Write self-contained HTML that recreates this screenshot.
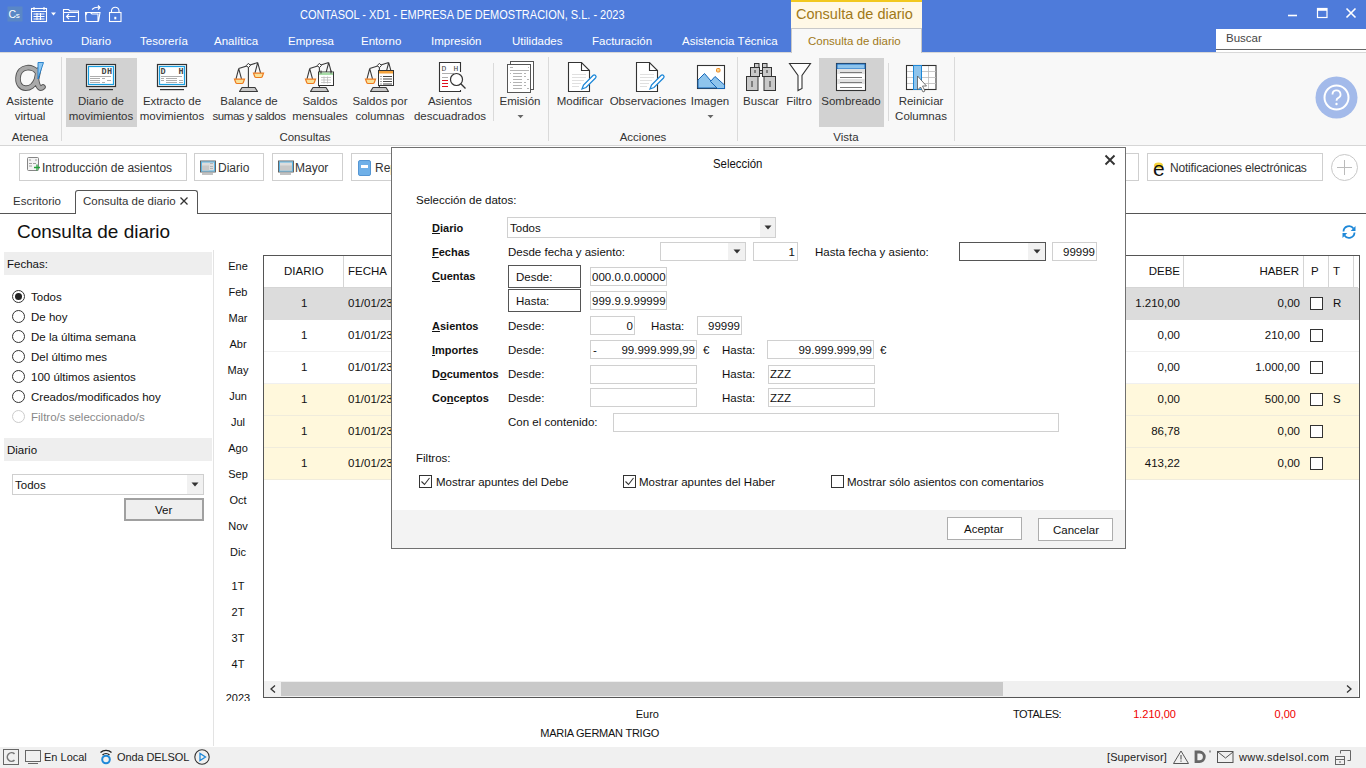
<!DOCTYPE html>
<html><head><meta charset="utf-8">
<style>
*{box-sizing:border-box;margin:0;padding:0}
html,body{width:1366px;height:768px;overflow:hidden;background:#fff;font-family:"Liberation Sans",sans-serif;font-size:11.5px;color:#222}
.a{position:absolute}
.t{position:absolute;white-space:nowrap;line-height:1}
#titlebar{left:0;top:0;width:1366px;height:52px;background:#4E7BDA;border-bottom:1px solid #D8D8D8;box-sizing:content-box}
.menu{color:#fff;font-size:11.5px;top:36px}
#ribbon{left:0;top:53px;width:1366px;height:93px;background:#F8F8F8;border-bottom:1px solid #D6D6D6}
.rb{position:absolute;text-align:center;color:#333;font-size:11.5px;line-height:15px;white-space:nowrap}
.sel{background:#D2D2D2}
.grp{position:absolute;top:84px;color:#333;font-size:11.5px;text-align:center}
.sep{position:absolute;width:1px;background:#DADADA}
.btn{position:absolute;border:1px solid #CFCFCF;background:#fff;height:28px}
.btn span{position:absolute;top:7px;font-size:12px;color:#333;white-space:nowrap}
.radio{position:absolute;width:13px;height:13px;border:1px solid #333;border-radius:50%;background:#fff}
.lbl{position:absolute;font-size:11.5px;color:#111;white-space:nowrap;line-height:1}
.month{position:absolute;left:213px;width:50px;text-align:center;font-size:11px;color:#111;line-height:1}
.cell{position:absolute;font-size:11.5px;color:#111;white-space:nowrap;line-height:1}
.cb{position:absolute;width:13px;height:13px;border:1px solid #333;background:#fff}
.inp{position:absolute;border:1px solid #D0D0D0;background:#fff;height:20px}
.dlbl{position:absolute;font-size:11.5px;color:#111;white-space:nowrap;line-height:1}
.bold{font-weight:bold;font-size:11px}
</style></head><body>

<!-- Title bar + menu -->
<div id="titlebar" class="a"></div>
<svg class="a" style="left:0;top:0" width="130" height="30" viewBox="0 0 130 30">
 <rect x="7.5" y="6.5" width="15" height="15" fill="#5A87C6"/>
 <text x="8.5" y="18.2" font-family="Liberation Sans" font-size="10.5" fill="#fff">C</text><text x="15.8" y="18.2" font-family="Liberation Sans" font-size="8" fill="#fff">s</text>
 <g fill="none" stroke="#fff" stroke-width="1.1">
 <rect x="31.5" y="8.5" width="15" height="13"/>
 <path d="M31.5 11.5h15M34 7v3M44 7v3M33.5 14h11M33.5 16.5h11M33.5 19h11M37 13v7M40.5 13v7"/>
 <path d="M63.5 9.5h5l1.5 1.5h8.5v10.5h-15z M63.5 12.5h15"/>
 <path d="M75.5 16.5h-9M69 14l-2.5 2.5 2.5 2.5"/>
 <path d="M85.5 12.5h5l1.5 1.5h6v7.5h-12z M86 15l1-2.5h13l-1.5 9"/>
 <path d="M92 9.5q3-3 8-2M98 5.5l2 2-2 2"/>
 <rect x="109.5" y="12.5" width="11.5" height="9"/>
 <path d="M111.5 12.5v-2a3.8 3.8 0 0 1 7.5 0v2"/>
 </g>
 <path d="M51 12.5h5l-2.5 3z" fill="#fff"/>
 <rect x="114.3" y="16.8" width="2" height="2.5" fill="#fff"/>
</svg>
<svg class="a" style="left:1280px;top:0" width="86" height="30" viewBox="1280 0 86 30">
 <path d="M1288 15.5h9" stroke="#fff" stroke-width="1.6"/>
 <rect x="1317.5" y="8.5" width="9.5" height="9" fill="none" stroke="#fff" stroke-width="1.2"/>
 <path d="M1317.5 9.8h9.5" stroke="#fff" stroke-width="2"/>
 <path d="M1346.5 8.5l9 9M1355.5 8.5l-9 9" stroke="#fff" stroke-width="1.6"/>
</svg>

<div class="t" style="left:300px;top:9px;color:#fff;font-size:12.5px;transform:scaleX(0.88);transform-origin:0 0">CONTASOL - XD1 - EMPRESA DE DEMOSTRACION, S.L. - 2023</div>
<div class="a" style="left:791px;top:0;width:131px;height:29px;background:#FFF8E6;border-top:2px solid #F2C81E;border-bottom:1px solid #C8C8C8"></div>
<div class="t" style="left:796px;top:7px;color:#A07818;font-size:14.5px">Consulta de diario</div>
<div class="a" style="left:791px;top:29px;width:131px;height:25px;background:#F8F8F8;border-left:1px solid #C8C8C8;border-right:1px solid #C8C8C8"></div>
<div class="t" style="left:808px;top:36px;color:#A07818;font-size:11.5px">Consulta de diario</div>

<div class="t menu" style="left:14px">Archivo</div>
<div class="t menu" style="left:81px">Diario</div>
<div class="t menu" style="left:140px">Tesorería</div>
<div class="t menu" style="left:214px">Analítica</div>
<div class="t menu" style="left:288px">Empresa</div>
<div class="t menu" style="left:361px">Entorno</div>
<div class="t menu" style="left:431px">Impresión</div>
<div class="t menu" style="left:512px">Utilidades</div>
<div class="t menu" style="left:592px">Facturación</div>
<div class="t menu" style="left:682px">Asistencia Técnica</div>

<div class="a" style="left:1216px;top:29px;width:150px;height:23px;background:#fff"></div><div class="a" style="left:1216px;top:49px;width:150px;height:1px;background:#666"></div>
<div class="t" style="left:1226px;top:33px;color:#444;font-size:11.5px">Buscar</div>

<!-- Ribbon -->
<div id="ribbon" class="a"></div>
<div class="a sel" style="left:66px;top:58px;width:71px;height:69px"></div>
<div class="a sel" style="left:819px;top:58px;width:65px;height:69px"></div>
<div class="sep" style="left:61px;top:57px;height:84px"></div>
<div class="sep" style="left:493px;top:63px;height:58px"></div>
<div class="sep" style="left:548px;top:57px;height:84px"></div>
<div class="sep" style="left:737px;top:57px;height:84px"></div>
<div class="sep" style="left:888px;top:63px;height:58px"></div>
<div class="sep" style="left:954px;top:57px;height:84px"></div>
<div class="rb" style="left:0;width:60px;top:94px">Asistente<br>virtual</div>
<div class="rb" style="left:61px;width:80px;top:94px">Diario de<br>movimientos</div>
<div class="rb" style="left:132px;width:80px;top:94px">Extracto de<br>movimientos</div>
<div class="rb" style="left:204px;width:90px;top:94px">Balance de<br><span style="letter-spacing:-0.45px">sumas y saldos</span></div>
<div class="rb" style="left:285px;width:70px;top:94px">Saldos<br>mensuales</div>
<div class="rb" style="left:345px;width:70px;top:94px">Saldos por<br>columnas</div>
<div class="rb" style="left:405px;width:90px;top:94px">Asientos<br>descuadrados</div>
<div class="rb" style="left:490px;width:60px;top:94px">Emisión</div>
<div class="rb" style="left:550px;width:60px;top:94px">Modificar</div>
<div class="rb" style="left:608px;width:80px;top:94px">Observaciones</div>
<div class="rb" style="left:680px;width:60px;top:94px">Imagen</div>
<div class="rb" style="left:741px;width:40px;top:94px">Buscar</div>
<div class="rb" style="left:779px;width:40px;top:94px">Filtro</div>
<div class="rb" style="left:816px;width:70px;top:94px">Sombreado</div>
<div class="rb" style="left:886px;width:70px;top:94px">Reiniciar<br>Columnas</div>
<div class="rb" style="left:0;width:60px;top:130px">Atenea</div>
<div class="rb" style="left:265px;width:80px;top:130px">Consultas</div>
<div class="rb" style="left:603px;width:80px;top:130px">Acciones</div>
<div class="rb" style="left:816px;width:60px;top:130px">Vista</div>
<svg class="a" style="left:0;top:0" width="1366" height="150" viewBox="0 0 1366 150">

 <!-- alpha -->
 <g fill="none" stroke-linecap="round">
 <path d="M37.5 72.5C34 66 19 64.5 18 78C17.5 91 32 91.5 36.5 79.5L38.5 70M36.5 80C38 88 40.5 89.5 43 87" stroke="#555" stroke-width="5.6"/>
 <path d="M37.5 72.5C34 66 19 64.5 18 78C17.5 91 32 91.5 36.5 79.5L38.5 70M36.5 80C38 88 40.5 89.5 43 87" stroke="#A9A9A9" stroke-width="3.8"/>
 </g>
 <path d="M38 62.5h5.5l-5.5 16.5z" fill="#8EC8F2" stroke="#1E7BC8" stroke-width="0.9"/>
 <!-- Diario de movimientos -->
 <g stroke-linecap="butt">
 <rect x="86.5" y="64.5" width="29" height="22" fill="#fff" stroke="#333" stroke-width="1.2"/>
 <rect x="88.5" y="66.5" width="25" height="18" fill="none" stroke="#1BA1E2" stroke-width="1.2"/>
 <rect x="89" y="89" width="24" height="1.2" fill="#333"/>
 <text x="101.5" y="74" font-family="Liberation Mono" font-size="8.5" font-weight="bold" fill="#444" letter-spacing="0.5">DH</text>
 <path d="M90 76.5h21M90 78.5h10M90 80.5h10M90 82.5h10M102 78.5h3M107 80.5h4M102 82.5h3" stroke="#999" stroke-width="0.8"/>
 <!-- Extracto -->
 <rect x="157.5" y="64.5" width="29" height="22" fill="#fff" stroke="#333" stroke-width="1.2"/>
 <rect x="159.5" y="66.5" width="25" height="18" fill="none" stroke="#1BA1E2" stroke-width="1.2"/>
 <rect x="160" y="89" width="24" height="1.2" fill="#333"/>
 <text x="160.5" y="74" font-family="Liberation Mono" font-size="8.5" font-weight="bold" fill="#444">D</text>
 <text x="178.5" y="74" font-family="Liberation Mono" font-size="8.5" font-weight="bold" fill="#444">H</text>
 <path d="M161 76.5h21M161 78.5h3M161 80.5h3M166 78.5h11M166 80.5h11M166 82.5h11M179 80.5h4M179 82.5h4" stroke="#999" stroke-width="0.8"/>
 </g>
 <!-- Balance -->
 <g transform="translate(0,0)"><path d="M238.7 68.6L257.7 62.6M248.4 66V87.5M238.7 68.6l-2.7 10.2M238.7 68.6l2.8 10.2M257.7 62.6l-2.7 10.2M257.7 62.6l2.8 10.2" stroke="#3A3A3A" stroke-width="1.1" fill="none"/><path d="M248.4 63.3l2 2.2-2 2.2-2-2.2z" fill="#fff" stroke="#3A3A3A" stroke-width="1"/><path d="M234.5 79.2h10l-1.2 3.3q-.4 1-1.4 1h-4.8q-1 0-1.4-1z" fill="#F8E19A" stroke="#EE7A1E" stroke-width="1.2"/><path d="M253.5 73.2h10l-1.2 3.3q-.4 1-1.4 1h-4.8q-1 0-1.4-1z" fill="#F8E19A" stroke="#EE7A1E" stroke-width="1.2"/><path d="M239.5 91.5l2.5-4h13l2.5 4z" fill="#C8C8C8" stroke="#3A3A3A" stroke-width="1.1" stroke-linejoin="round"/></g>
 <!-- Saldos mensuales -->
 <g transform="translate(71,0)"><path d="M238.7 68.6L257.7 62.6M248.4 66V87.5M238.7 68.6l-2.7 10.2M238.7 68.6l2.8 10.2M257.7 62.6l-2.7 10.2M257.7 62.6l2.8 10.2" stroke="#3A3A3A" stroke-width="1.1" fill="none"/><path d="M248.4 63.3l2 2.2-2 2.2-2-2.2z" fill="#fff" stroke="#3A3A3A" stroke-width="1"/><path d="M234.5 79.2h10l-1.2 3.3q-.4 1-1.4 1h-4.8q-1 0-1.4-1z" fill="#F8E19A" stroke="#EE7A1E" stroke-width="1.2"/><path d="M239.5 91.5l2.5-4h13l2.5 4z" fill="#C8C8C8" stroke="#3A3A3A" stroke-width="1.1" stroke-linejoin="round"/></g>
 <rect x="318.5" y="72" width="15" height="13.5" fill="#fff" stroke="#333" stroke-width="1"/>
 <rect x="319" y="72.5" width="14" height="2.5" fill="#A8DDA8"/>
 <path d="M321 70.5v3M331 70.5v3" stroke="#333" stroke-width="1"/>
 <path d="M321 77.5h10M321 80h10M321 82.5h10M324 76.5v7M327.5 76.5v7" stroke="#BBB" stroke-width="0.8"/>
 <!-- Saldos por columnas -->
 <g transform="translate(131,0)"><path d="M238.7 68.6L257.7 62.6M248.4 66V87.5M238.7 68.6l-2.7 10.2M238.7 68.6l2.8 10.2M257.7 62.6l-2.7 10.2M257.7 62.6l2.8 10.2" stroke="#3A3A3A" stroke-width="1.1" fill="none"/><path d="M248.4 63.3l2 2.2-2 2.2-2-2.2z" fill="#fff" stroke="#3A3A3A" stroke-width="1"/><path d="M234.5 79.2h10l-1.2 3.3q-.4 1-1.4 1h-4.8q-1 0-1.4-1z" fill="#F8E19A" stroke="#EE7A1E" stroke-width="1.2"/><path d="M239.5 91.5l2.5-4h13l2.5 4z" fill="#C8C8C8" stroke="#3A3A3A" stroke-width="1.1" stroke-linejoin="round"/></g>
 <rect x="378.5" y="70.5" width="15" height="15" fill="#fff" stroke="#333" stroke-width="1"/>
 <rect x="379" y="71" width="14" height="2.5" fill="#F4A23C"/>
 <path d="M380.5 76.5h1M380.5 79h1M380.5 81.5h1M380.5 84h1M383 76.5h9M383 79h9M383 81.5h9M383 84h9" stroke="#333" stroke-width="0.9"/>
 <!-- Asientos descuadrados -->
 <path d="M460.5 72V62.5h-21v29h21v-1.5" fill="#fff" stroke="#333" stroke-width="1.1"/>
 <text x="441.5" y="71" font-family="Liberation Mono" font-size="8" fill="#444">D</text>
 <text x="453.5" y="71" font-family="Liberation Mono" font-size="8" fill="#444">H</text>
 <path d="M442 73.5h12M442 77.5h6" stroke="#999" stroke-width="0.8"/>
 <path d="M442 80.5h6M442 83.5h6M442 86.5h6" stroke="#E0101E" stroke-width="1"/>
 <circle cx="456.5" cy="79.5" r="6" fill="#fff" stroke="#333" stroke-width="1.2"/>
 <path d="M460.8 83.8l4.7 4.7" stroke="#333" stroke-width="1.3"/>
 <!-- Emision -->
 <rect x="510.5" y="61.5" width="23" height="28" fill="#fff" stroke="#555" stroke-width="1"/>
 <rect x="507.5" y="64.5" width="23" height="28" fill="#fff" stroke="#555" stroke-width="1"/>
 <path d="M510 67.5h3M528 67.5h1M510 70.5h19M510 73.5h1M513 73.5h9M524 73.5h2M513 76.5h9M524 76.5h2M513 79.5h9M527 79.5h2M510 82.5h1M513 82.5h9M524 82.5h2M513 85.5h9M524 85.5h2M513 88.5h9M527 88.5h2" stroke="#AAA" stroke-width="0.9"/>
 <!-- Modificar -->
 <path d="M568.5 62.5h13l8 8v21h-21z" fill="#fff" stroke="#333" stroke-width="1.1"/>
 <path d="M581.5 62.5v8h8" fill="none" stroke="#333" stroke-width="1.1"/>
 <path d="M572 74.5h14M572 77.5h14M572 80.5h12M572 83.5h9M572 86.5h7" stroke="#DDD" stroke-width="0.9"/>
 <path d="M582 89l1.5-4 9.5-9.5a1.7 1.7 0 0 1 2.5 2.5l-9.5 9.5z" fill="#fff" stroke="#1E88D8" stroke-width="1.3"/>
 <!-- Observaciones -->
 <path d="M636.5 62.5h13l8 8v21h-21z" fill="#fff" stroke="#333" stroke-width="1.1"/>
 <path d="M649.5 62.5v8h8" fill="none" stroke="#333" stroke-width="1.1"/>
 <path d="M640 74.5h14M640 77.5h14M640 80.5h12M640 83.5h9M640 86.5h7" stroke="#DDD" stroke-width="0.9"/>
 <path d="M650 89l1.5-4 9.5-9.5a1.7 1.7 0 0 1 2.5 2.5l-9.5 9.5z" fill="#fff" stroke="#1E88D8" stroke-width="1.3"/>
 <!-- Imagen -->
 <rect x="697.5" y="65.5" width="27" height="23" fill="#fff" stroke="#333" stroke-width="1.1"/>
 <path d="M698 80l6.5-6.5 12.5 14.5h-19z" fill="#8EC4EC" stroke="#1566B8" stroke-width="1"/>
 <path d="M710.5 81.5l4.5-5 9.5 8.5v3.5h-7z" fill="#8EC4EC" stroke="#1566B8" stroke-width="1"/>
 <rect x="716.5" y="68.5" width="3.5" height="3.5" rx="1" fill="#F9D68C" stroke="#F08A24" stroke-width="1"/>
 <!-- Buscar -->
 <g fill="#C9C9C9" stroke="#333" stroke-width="1">
 <rect x="754.5" y="63.5" width="4.5" height="4"/><rect x="762.5" y="63.5" width="4.5" height="4"/>
 <rect x="750.5" y="67.5" width="9" height="9"/><rect x="762.5" y="67.5" width="9" height="9"/>
 <rect x="746.5" y="76.5" width="11.5" height="14"/><rect x="764" y="76.5" width="11.5" height="14"/>
 <rect x="759.5" y="70.5" width="3" height="3"/>
 </g>
 <path d="M755 70v3M767 70v3M752 81v6M770 81v6" stroke="#333" stroke-width="1"/>
 <!-- Filtro -->
 <path d="M789.5 63.5h21l-8.5 12v13l-4 2v-15z" fill="#fff" stroke="#333" stroke-width="1.1"/>
 <!-- Sombreado -->
 <rect x="836.5" y="63.5" width="29" height="27" fill="#fff" stroke="#333" stroke-width="1.1"/>
 <rect x="837" y="64" width="28" height="5" fill="#8EC4EC" stroke="#1568C0" stroke-width="1"/>
 <rect x="837" y="69" width="28" height="5" fill="#E2E2E2"/>
 <rect x="837" y="79" width="28" height="5" fill="#E2E2E2"/>
 <path d="M840 72.5h22M840 77.5h22M840 82.5h22M840 87.5h22" stroke="#7A7A7A" stroke-width="1"/>
 <!-- Reiniciar columnas -->
 <rect x="906.5" y="65.5" width="29.5" height="24" fill="#fff" stroke="#333" stroke-width="1.1"/>
 <path d="M907 71.5h29M907 77.5h29M907 83.5h29M928.5 66v23" stroke="#BBB" stroke-width="0.8"/>
 <rect x="913.5" y="65.5" width="8" height="24" fill="#8EC4EC" stroke="#1E88D8" stroke-width="1"/>
 <path d="M917.5 76v14l3-3 2.5 5 2-1-2.5-5h4z" fill="#fff" stroke="#555" stroke-width="0.8"/>
 <!-- dropdown arrows -->
 <path d="M517.5 115h6l-3 3.2z" fill="#666"/>
 <path d="M707.5 115h6l-3 3.2z" fill="#666"/>
 <!-- help -->
 <circle cx="1336.5" cy="97.5" r="21" fill="#A3BAEA"/>
 <circle cx="1336.5" cy="97.5" r="12" fill="none" stroke="#fff" stroke-width="2"/>
 <path d="M1332.5 94.5a4 4 0 1 1 5.5 3.6c-1.2.6-1.5 1.2-1.5 2.6" fill="none" stroke="#fff" stroke-width="1.8"/>
 <circle cx="1336.5" cy="104" r="1.2" fill="#fff"/>
</svg>

<!-- Toolbar buttons -->
<div class="btn" style="left:19px;top:153px;width:168px"><span style="left:22px">Introducción de asientos</span></div>
<div class="btn" style="left:194px;top:153px;width:70px"><span style="left:23px">Diario</span></div>
<div class="btn" style="left:272px;top:153px;width:71px"><span style="left:22px">Mayor</span></div>
<div class="btn" style="left:351px;top:153px;width:60px"><span style="left:23px">Rep</span></div>
<div class="btn" style="left:1060px;top:153px;width:79px"></div>
<div class="btn" style="left:1147px;top:153px;width:176px"><span style="left:22px;letter-spacing:-0.2px">Notificaciones electrónicas</span></div>
<svg class="a" style="left:0;top:145px" width="1366" height="110" viewBox="0 145 1366 110">
 <!-- intro icon -->
 <rect x="27.5" y="157.5" width="11" height="13" rx="1" fill="#F4F4F4" stroke="#777" stroke-width="0.9"/>
 <path d="M29 160h2M35 160h2M29 163.5h3M29 166h3M33 163.5h3" stroke="#888" stroke-width="0.8"/>
 <path d="M34 167.5h6M37 164.5v6" stroke="#22A03A" stroke-width="1.3"/>
 <!-- diario icon -->
 <g transform="translate(0,2.5)">
 <rect x="200.5" y="158.5" width="15" height="11" fill="#DDD" stroke="#555" stroke-width="0.9"/>
 <rect x="201.5" y="159.5" width="13" height="9" fill="none" stroke="#4FB3E8" stroke-width="0.9"/>
 <rect x="202" y="163" width="7" height="5" fill="#C8C8C8"/>
 <path d="M210 161h3M210 164h3M210 166h3" stroke="#AAA" stroke-width="0.8"/>
 <path d="M202 171.5h11" stroke="#666" stroke-width="0.8"/>
 <!-- mayor icon -->
 <rect x="278.5" y="158.5" width="15" height="11" fill="#DDD" stroke="#555" stroke-width="0.9"/>
 <rect x="279.5" y="159.5" width="13" height="9" fill="none" stroke="#4FB3E8" stroke-width="0.9"/>
 <rect x="280" y="163" width="12" height="5" fill="#C8C8C8"/>
 <path d="M280 171.5h11" stroke="#666" stroke-width="0.8"/>
 </g>
 <!-- rep icon -->
 <rect x="358.5" y="160.5" width="12" height="15" rx="1.5" fill="#6FB0E8" stroke="#4A8FD0" stroke-width="0.9"/>
 <rect x="361" y="165" width="7" height="3" fill="#fff"/>
 <!-- notif e -->
 <ellipse cx="1158.5" cy="165.5" rx="4.5" ry="3" fill="#F5D33A"/>
 <text x="1153" y="175.5" font-family="Liberation Sans" font-size="21" fill="#111">e</text>
 <!-- plus -->
 <circle cx="1344.5" cy="167.5" r="13" fill="#fff" stroke="#C8C8C8" stroke-width="1"/>
 <path d="M1337 167.5h15M1344.5 160v15" stroke="#BBB" stroke-width="1"/>
 <!-- tab x -->
 <path d="M180.5 197.5l7 7M187.5 197.5l-7 7" stroke="#333" stroke-width="1.3"/>
 <!-- refresh -->
 <path d="M1343.5 231.5a5.5 5.5 0 0 1 10-3" fill="none" stroke="#1E88D8" stroke-width="1.8"/>
 <path d="M1355.5 226v5h-4.8z" fill="#1E88D8"/>
 <path d="M1354.5 232.5a5.5 5.5 0 0 1-10 3" fill="none" stroke="#1E88D8" stroke-width="1.8"/>
 <path d="M1342.5 238v-5h4.8z" fill="#1E88D8"/>
</svg>

<!-- Tabs -->
<div class="a" style="left:0;top:213px;width:1366px;height:1px;background:#555"></div>
<div class="t" style="left:13px;top:196px;font-size:11.5px;color:#333">Escritorio</div>
<div class="a" style="left:75px;top:190px;width:123px;height:24px;background:#fff;border:1px solid #555;border-bottom:none;border-radius:3px 3px 0 0"></div>
<div class="t" style="left:83px;top:196px;font-size:11.5px;color:#333">Consulta de diario</div>
<svg class="a" style="left:0;top:190px" width="200" height="22" viewBox="0 190 200 22"><path d="M180.5 197.5l7 7M187.5 197.5l-7 7" stroke="#333" stroke-width="1.3"/></svg>

<div class="t" style="left:17px;top:222px;font-size:19px;color:#111">Consulta de diario</div>

<!-- Left panel -->
<div class="a" style="left:4px;top:252px;width:208px;height:23px;background:#EEEEEE"></div>
<div class="lbl" style="left:7px;top:259px">Fechas:</div>
<div class="a" style="left:213px;top:250px;width:1px;height:496px;background:#E3E3E3"></div>
<div class="radio" style="left:12px;top:290px"></div><div class="a" style="left:15px;top:293px;width:7px;height:7px;border-radius:50%;background:#222"></div>
<div class="lbl" style="left:31px;top:292px">Todos</div>
<div class="radio" style="left:12px;top:310px"></div><div class="lbl" style="left:31px;top:312px">De hoy</div>
<div class="radio" style="left:12px;top:330px"></div><div class="lbl" style="left:31px;top:332px">De la última semana</div>
<div class="radio" style="left:12px;top:350px"></div><div class="lbl" style="left:31px;top:352px">Del último mes</div>
<div class="radio" style="left:12px;top:370px"></div><div class="lbl" style="left:31px;top:372px">100 últimos asientos</div>
<div class="radio" style="left:12px;top:390px"></div><div class="lbl" style="left:31px;top:392px">Creados/modificados hoy</div>
<div class="radio" style="left:12px;top:410px;border-color:#CCC"></div><div class="lbl" style="left:31px;top:412px;color:#888">Filtro/s seleccionado/s</div>
<div class="a" style="left:4px;top:438px;width:208px;height:23px;background:#EEEEEE"></div>
<div class="lbl" style="left:7px;top:445px">Diario</div>
<div class="a" style="left:12px;top:474px;width:192px;height:21px;border:1px solid #CFCFCF;background:#fff"></div>
<div class="a" style="left:187px;top:475px;width:16px;height:19px;background:#F1F1F1"></div>
<div class="lbl" style="left:15px;top:480px">Todos</div>
<svg class="a" style="left:191px;top:482px" width="8" height="5"><path d="M0.5 0.5h7l-3.5 4z" fill="#333"/></svg>
<div class="a" style="left:124px;top:498px;width:80px;height:23px;border:2px solid #A0A0A0;background:#EFEFEF"></div>
<div class="lbl" style="left:155px;top:505px">Ver</div>

<!-- Months -->
<div class="month" style="top:261px">Ene</div>
<div class="month" style="top:287px">Feb</div>
<div class="month" style="top:313px">Mar</div>
<div class="month" style="top:339px">Abr</div>
<div class="month" style="top:365px">May</div>
<div class="month" style="top:391px">Jun</div>
<div class="month" style="top:417px">Jul</div>
<div class="month" style="top:443px">Ago</div>
<div class="month" style="top:469px">Sep</div>
<div class="month" style="top:495px">Oct</div>
<div class="month" style="top:521px">Nov</div>
<div class="month" style="top:547px">Dic</div>
<div class="month" style="top:581px">1T</div>
<div class="month" style="top:607px">2T</div>
<div class="month" style="top:633px">3T</div>
<div class="month" style="top:659px">4T</div>
<div class="month" style="top:693px;height:8px;overflow:hidden">2023</div>

<!-- Table -->
<div class="a" style="left:263px;top:255px;width:1097px;height:443px;border:1px solid #555;background:#fff"></div>
<div class="a" style="left:264px;top:287px;width:1094px;height:1px;background:#D5D5D5"></div>
<div class="a" style="left:343px;top:256px;width:1px;height:31px;background:#D5D5D5"></div>
<div class="a" style="left:1183px;top:256px;width:1px;height:31px;background:#D5D5D5"></div>
<div class="a" style="left:1303px;top:256px;width:1px;height:31px;background:#D5D5D5"></div>
<div class="a" style="left:1328px;top:256px;width:1px;height:31px;background:#D5D5D5"></div>
<div class="a" style="left:1353px;top:256px;width:1px;height:31px;background:#D5D5D5"></div>
<div class="cell" style="left:284px;top:266px">DIARIO</div>
<div class="cell" style="left:348px;top:266px">FECHA</div>
<div class="cell" style="right:186px;top:266px">DEBE</div>
<div class="cell" style="right:67px;top:266px">HABER</div>
<div class="cell" style="left:1311px;top:266px">P</div>
<div class="cell" style="left:1333px;top:266px">T</div>

<div class="a" style="left:264px;top:288px;width:1095px;height:32px;background:#DCDCDC;border-bottom:1px solid #DCDCDC"></div>
<div class="a" style="left:264px;top:320px;width:1095px;height:32px;background:#fff;border-bottom:1px solid #F0F0F0"></div>
<div class="a" style="left:264px;top:352px;width:1095px;height:32px;background:#fff;border-bottom:1px solid #F0F0F0"></div>
<div class="a" style="left:264px;top:384px;width:1095px;height:32px;background:#FFF8DC;border-bottom:1px solid #F0ECDC"></div>
<div class="a" style="left:264px;top:416px;width:1095px;height:32px;background:#FFF8DC;border-bottom:1px solid #F0ECDC"></div>
<div class="a" style="left:264px;top:448px;width:1095px;height:32px;background:#FFF8DC;border-bottom:1px solid #F0ECDC"></div>
<div class="cell" style="left:301px;top:298px">1</div><div class="cell" style="left:348px;top:298px">01/01/23</div><div class="cell" style="right:186px;top:298px">1.210,00</div><div class="cell" style="right:66px;top:298px">0,00</div><div class="cb" style="left:1310px;top:297px"></div><div class="cell" style="left:1333px;top:298px">R</div>
<div class="cell" style="left:301px;top:330px">1</div><div class="cell" style="left:348px;top:330px">01/01/23</div><div class="cell" style="right:186px;top:330px">0,00</div><div class="cell" style="right:66px;top:330px">210,00</div><div class="cb" style="left:1310px;top:329px"></div>
<div class="cell" style="left:301px;top:362px">1</div><div class="cell" style="left:348px;top:362px">01/01/23</div><div class="cell" style="right:186px;top:362px">0,00</div><div class="cell" style="right:66px;top:362px">1.000,00</div><div class="cb" style="left:1310px;top:361px"></div>
<div class="cell" style="left:301px;top:394px">1</div><div class="cell" style="left:348px;top:394px">01/01/23</div><div class="cell" style="right:186px;top:394px">0,00</div><div class="cell" style="right:66px;top:394px">500,00</div><div class="cb" style="left:1310px;top:393px"></div><div class="cell" style="left:1333px;top:394px">S</div>
<div class="cell" style="left:301px;top:426px">1</div><div class="cell" style="left:348px;top:426px">01/01/23</div><div class="cell" style="right:186px;top:426px">86,78</div><div class="cell" style="right:66px;top:426px">0,00</div><div class="cb" style="left:1310px;top:425px"></div>
<div class="cell" style="left:301px;top:458px">1</div><div class="cell" style="left:348px;top:458px">01/01/23</div><div class="cell" style="right:186px;top:458px">413,22</div><div class="cell" style="right:66px;top:458px">0,00</div><div class="cb" style="left:1310px;top:457px"></div>


<!-- scrollbar -->
<div class="a" style="left:264px;top:681px;width:1094px;height:16px;background:#F0F0F0"></div>
<div class="a" style="left:281px;top:682px;width:722px;height:14px;background:#C9C9C9"></div>
<svg class="a" style="left:264px;top:681px" width="1094" height="16"><path d="M11 4.5l-4 3.5 4 3.5" fill="none" stroke="#333" stroke-width="1.3"/><path d="M1083 4.5l4 3.5-4 3.5" fill="none" stroke="#333" stroke-width="1.3"/></svg>

<!-- Footer -->
<div class="t" style="right:707px;top:709px;font-size:11px;color:#111">Euro</div>
<div class="t" style="right:707px;top:728px;font-size:11px;color:#111;letter-spacing:-0.25px">MARIA GERMAN TRIGO</div>
<div class="t" style="left:1013px;top:709px;font-size:11px;color:#111;letter-spacing:-0.5px">TOTALES:</div>
<div class="t" style="right:190px;top:709px;font-size:11px;color:#F00000">1.210,00</div>
<div class="t" style="right:70px;top:709px;font-size:11px;color:#F00000">0,00</div>

<!-- Status bar -->
<div class="a" style="left:0;top:747px;width:1366px;height:21px;background:#F0F0F0"></div>
<div class="t" style="left:44px;top:752px;font-size:11px;color:#222">En Local</div>
<div class="t" style="left:117px;top:752px;font-size:11px;color:#222;letter-spacing:-0.1px">Onda DELSOL</div>
<div class="t" style="left:1107px;top:752px;font-size:11px;color:#222;letter-spacing:0.1px">[Supervisor]</div>
<div class="t" style="left:1239px;top:752px;font-size:11px;color:#222;letter-spacing:0.4px">www.sdelsol.com</div>
<svg class="a" style="left:0;top:746px" width="1366" height="22" viewBox="0 746 1366 22">
 <rect x="3.5" y="749.5" width="15" height="15" fill="none" stroke="#666" stroke-width="1"/>
 <path d="M14.5 753.8a4.3 4.3 0 1 0 0 6.4" fill="none" stroke="#777" stroke-width="1.6"/>
 <rect x="25.5" y="750.5" width="15" height="11" fill="none" stroke="#666" stroke-width="1"/>
 <path d="M28 763.5h10" stroke="#666"/>
 <circle cx="106" cy="759.5" r="3.8" fill="none" stroke="#1E88D8" stroke-width="2"/>
 <path d="M100.5 752.5a8 8 0 0 1 11 0M102.5 755a5 5 0 0 1 7 0" fill="none" stroke="#222" stroke-width="1.3"/>
 <circle cx="202" cy="757" r="7.2" fill="none" stroke="#333" stroke-width="1.1"/>
 <path d="M200 753.5v7l5.5-3.5z" fill="none" stroke="#1E88D8" stroke-width="1.3"/>
 <path d="M1181 751l7.5 12.5h-15z" fill="none" stroke="#555" stroke-width="1"/>
 <path d="M1181 755v4.5M1181 760.5v1.3" stroke="#555" stroke-width="1.1"/>
 <path d="M1196 752h3.5a4.8 4.8 0 0 1 0 9.6h-3.5z" fill="none" stroke="#666" stroke-width="2.8"/>
 <rect x="1209" y="750.5" width="2" height="2" fill="#999"/>
 <rect x="1217.5" y="751.5" width="15.5" height="11" fill="none" stroke="#555" stroke-width="1"/>
 <path d="M1218 752l7.5 6 7.5-6" fill="none" stroke="#555" stroke-width="1"/>
 <path d="M1340.5 753.5v-3h10v10h-3" fill="none" stroke="#666"/>
 <rect x="1335.5" y="756.5" width="9" height="8" fill="#F0F0F0" stroke="#666"/>
 <path d="M1336 759.5h8M1340 761v2" stroke="#666"/>
</svg>

<!-- Dialog -->
<div class="a" style="left:391px;top:147px;width:735px;height:402px;background:#fff;border:1px solid #707070;box-shadow:0 0 0 0 #000"></div>
<div class="a" style="left:392px;top:510px;width:733px;height:38px;background:#F3F3F3"></div>
<div class="dlbl" style="left:713px;top:158px;font-size:12px;transform:scaleX(0.95);transform-origin:0 0">Selección</div>
<svg class="a" style="left:1104px;top:154px" width="12" height="12"><path d="M1.5 1.5l9 9M10.5 1.5l-9 9" stroke="#333" stroke-width="1.9"/></svg>
<div class="dlbl" style="left:416px;top:195px">Selección de datos:</div>

<div class="dlbl bold" style="left:432px;top:223px"><u>D</u>iario</div>
<div class="inp" style="left:507px;top:217px;width:269px;height:21px"></div>
<div class="a" style="left:760px;top:218px;width:15px;height:19px;background:#F1F1F1"></div>
<svg class="a" style="left:764px;top:225px" width="8" height="5"><path d="M0.5 0.5h7l-3.5 4z" fill="#333"/></svg>
<div class="dlbl" style="left:510px;top:223px">Todos</div>

<div class="dlbl bold" style="left:432px;top:247px"><u>F</u>echas</div>
<div class="dlbl" style="left:508px;top:247px">Desde fecha y asiento:</div>
<div class="inp" style="left:660px;top:242px;width:86px;height:19px"></div>
<div class="a" style="left:728px;top:243px;width:17px;height:17px;background:#F1F1F1"></div>
<svg class="a" style="left:733px;top:249px" width="8" height="5"><path d="M0.5 0.5h7l-3.5 4z" fill="#333"/></svg>
<div class="inp" style="left:753px;top:242px;width:45px;height:19px"></div>
<div class="dlbl" style="right:571px;top:247px">1</div>
<div class="dlbl" style="left:815px;top:247px">Hasta fecha y asiento:</div>
<div class="inp" style="left:959px;top:242px;width:87px;height:19px;border-color:#555"></div>
<div class="a" style="left:1028px;top:243px;width:17px;height:17px;background:#F1F1F1"></div>
<svg class="a" style="left:1033px;top:249px" width="8" height="5"><path d="M0.5 0.5h7l-3.5 4z" fill="#333"/></svg>
<div class="inp" style="left:1052px;top:242px;width:45px;height:19px"></div>
<div class="dlbl" style="right:271px;top:247px">99999</div>

<div class="dlbl bold" style="left:432px;top:271px"><u>C</u>uentas</div>
<div class="a" style="left:508px;top:265px;width:73px;height:23px;border:1px solid #555;background:#fff"></div>
<div class="dlbl" style="left:516px;top:272px">Desde:</div>
<div class="inp" style="left:590px;top:267px;width:77px;height:19px"></div>
<div class="dlbl" style="left:592px;top:272px">000.0.0.00000</div>
<div class="a" style="left:508px;top:289px;width:73px;height:23px;border:1px solid #555;background:#fff"></div>
<div class="dlbl" style="left:516px;top:296px">Hasta:</div>
<div class="inp" style="left:590px;top:291px;width:77px;height:19px"></div>
<div class="dlbl" style="left:592px;top:296px">999.9.9.99999</div>

<div class="dlbl bold" style="left:432px;top:321px"><u>A</u>sientos</div>
<div class="dlbl" style="left:508px;top:321px">Desde:</div>
<div class="inp" style="left:590px;top:316px;width:45px;height:19px"></div>
<div class="dlbl" style="right:733px;top:321px">0</div>
<div class="dlbl" style="left:651px;top:321px">Hasta:</div>
<div class="inp" style="left:697px;top:316px;width:45px;height:19px"></div>
<div class="dlbl" style="right:626px;top:321px">99999</div>

<div class="dlbl bold" style="left:432px;top:345px"><u>I</u>mportes</div>
<div class="dlbl" style="left:508px;top:345px">Desde:</div>
<div class="inp" style="left:590px;top:340px;width:107px;height:19px"></div>
<div class="dlbl" style="left:593px;top:345px">-</div>
<div class="dlbl" style="right:671px;top:345px">99.999.999,99</div>
<div class="dlbl" style="left:703px;top:345px">€</div>
<div class="dlbl" style="left:722px;top:345px">Hasta:</div>
<div class="inp" style="left:767px;top:340px;width:107px;height:19px"></div>
<div class="dlbl" style="right:494px;top:345px">99.999.999,99</div>
<div class="dlbl" style="left:880px;top:345px">€</div>

<div class="dlbl bold" style="left:432px;top:369px">D<u>o</u>cumentos</div>
<div class="dlbl" style="left:508px;top:369px">Desde:</div>
<div class="inp" style="left:590px;top:365px;width:107px;height:19px"></div>
<div class="dlbl" style="left:722px;top:369px">Hasta:</div>
<div class="inp" style="left:768px;top:365px;width:107px;height:19px"></div>
<div class="dlbl" style="left:770px;top:369px">ZZZ</div>

<div class="dlbl bold" style="left:432px;top:393px">Co<u>n</u>ceptos</div>
<div class="dlbl" style="left:508px;top:393px">Desde:</div>
<div class="inp" style="left:590px;top:388px;width:107px;height:19px"></div>
<div class="dlbl" style="left:722px;top:393px">Hasta:</div>
<div class="inp" style="left:768px;top:388px;width:107px;height:19px"></div>
<div class="dlbl" style="left:770px;top:393px">ZZZ</div>

<div class="dlbl" style="left:508px;top:417px">Con el contenido:</div>
<div class="inp" style="left:613px;top:413px;width:446px;height:19px"></div>

<div class="dlbl" style="left:416px;top:453px">Filtros:</div>
<div class="cb" style="left:419px;top:475px"></div>
<svg class="a" style="left:419px;top:475px" width="13" height="13"><path d="M2.5 6.5l3 3 5-6.5" fill="none" stroke="#333" stroke-width="1.1"/></svg>
<div class="dlbl" style="left:436px;top:477px">Mostrar apuntes del Debe</div>
<div class="cb" style="left:623px;top:475px"></div>
<svg class="a" style="left:623px;top:475px" width="13" height="13"><path d="M2.5 6.5l3 3 5-6.5" fill="none" stroke="#333" stroke-width="1.1"/></svg>
<div class="dlbl" style="left:639px;top:477px">Mostrar apuntes del Haber</div>
<div class="cb" style="left:831px;top:475px"></div>
<div class="dlbl" style="left:847px;top:477px">Mostrar sólo asientos con comentarios</div>

<div class="a" style="left:947px;top:517px;width:75px;height:23px;border:1px solid #ADADAD;background:#fff"></div>
<div class="dlbl" style="left:964px;top:524px">Aceptar</div>
<div class="a" style="left:1038px;top:518px;width:75px;height:23px;border:1px solid #ADADAD;background:#fff"></div>
<div class="dlbl" style="left:1053px;top:525px">Cancelar</div>

</body></html>
